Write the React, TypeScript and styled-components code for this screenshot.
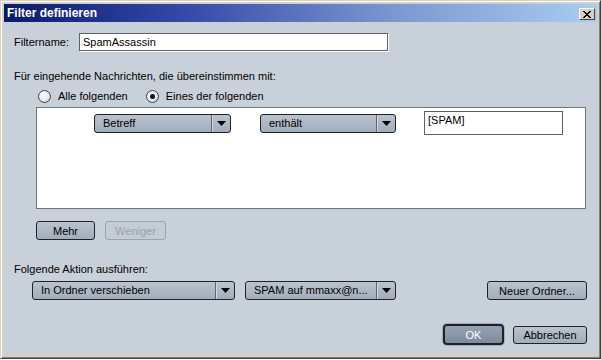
import React from "react";
import styled, { createGlobalStyle } from "styled-components";

const GlobalStyle = createGlobalStyle`
  html, body {
    margin: 0;
    padding: 0;
    background: #ffffff;
    font-family: "Liberation Sans", Arial, sans-serif;
    font-size: 11px;
    color: #000;
  }
`;

const Frame = styled.div`
  width: 601px;
  height: 359px;
  box-sizing: border-box;
  background: #d4d0c8;
  border-top: 1px solid #d4d0c8;
  border-left: 1px solid #d4d0c8;
  border-right: 1px solid #404040;
  border-bottom: 1px solid #404040;
  box-shadow: inset 1px 1px 0 #ffffff, inset -1px -1px 0 #808080;
  padding: 3px 3px 4px 3px;
  display: flex;
  flex-direction: column;
`;

const TitleBar = styled.div`
  height: 18px;
  display: flex;
  align-items: center;
  justify-content: space-between;
  padding: 0 2px 0 3px;
  background: linear-gradient(to right, #0a1a6a 0%, #3448a8 30%, #7a96d0 65%, #a8cdf2 100%);
`;

const Title = styled.span`
  color: #fff;
  font-weight: bold;
  font-size: 12px;
`;

const CloseButton = styled.div`
  width: 16px;
  height: 12px;
  margin-top: 2px;
  box-sizing: border-box;
  background: #d4d0c8;
  border-top: 1px solid #fff;
  border-left: 1px solid #fff;
  border-right: 1px solid #404040;
  border-bottom: 1px solid #404040;
  display: flex;
  align-items: center;
  justify-content: center;
`;

const Body = styled.div`
  flex: 1;
  background: #c8d0d9;
  padding: 0 10px 0 10px;
  display: flex;
  flex-direction: column;
`;

const Row = styled.div<{ $top: number; $left?: number; $gap?: number }>`
  display: flex;
  align-items: center;
  margin-top: ${({ $top }) => $top}px;
  margin-left: ${({ $left }) => $left ?? 0}px;
  gap: ${({ $gap }) => $gap ?? 0}px;
`;

const Label = styled.span<{ $width?: number }>`
  display: inline-block;
  line-height: 14px;
  white-space: nowrap;
  ${({ $width }) => ($width ? `width: ${$width}px;` : "")}
`;

const TextInput = styled.div<{ $width: number; $height: number }>`
  width: ${({ $width }) => $width}px;
  height: ${({ $height }) => $height}px;
  box-sizing: border-box;
  background: #fff;
  border: 1px solid #5a6272;
  box-shadow: 1px 1px 0 #ffffff;
  padding: 2px 3px;
  line-height: 13px;
  white-space: nowrap;
`;

const RadioItem = styled.label`
  display: flex;
  align-items: center;
  gap: 7px;
  line-height: 14px;
`;

const RadioCircle = styled.span<{ $checked?: boolean }>`
  width: 13px;
  height: 13px;
  box-sizing: border-box;
  border-radius: 50%;
  border: 1px solid #3c4450;
  background: radial-gradient(circle at 40% 35%, #ffffff 0%, #e4e9ee 55%, #b4bfcc 100%);
  display: flex;
  align-items: center;
  justify-content: center;

  &::after {
    content: "";
    width: 5px;
    height: 5px;
    border-radius: 50%;
    background: #101418;
    display: ${({ $checked }) => ($checked ? "block" : "none")};
  }
`;

const ListBox = styled.div`
  margin-top: 4px;
  margin-left: 22px;
  width: 550px;
  height: 102px;
  box-sizing: border-box;
  background: #fff;
  border: 1px solid #6c7480;
  padding: 3px 0 0 57px;
`;

const Select = styled.div<{ $width: number }>`
  width: ${({ $width }) => $width}px;
  height: 19px;
  box-sizing: border-box;
  border: 1px solid #1c2228;
  border-radius: 3px;
  background: linear-gradient(#bac3cf, #a2adbc);
  display: flex;
  align-items: stretch;
`;

const SelectText = styled.span`
  flex: 1;
  padding-left: 8px;
  line-height: 17px;
  white-space: nowrap;
  overflow: hidden;
`;

const SelectArrow = styled.span`
  width: 18px;
  border-left: 1px solid #5c6674;
  box-shadow: inset 1px 0 0 #d0d6de;
  display: flex;
  align-items: center;
  justify-content: center;
`;

const Button = styled.div<{ $width: number; $height?: number; $disabled?: boolean }>`
  width: ${({ $width }) => $width}px;
  height: ${({ $height }) => $height ?? 19}px;
  box-sizing: border-box;
  border: 1px solid ${({ $disabled }) => ($disabled ? "#9aa4b2" : "#1c2228")};
  border-radius: 3px;
  background: ${({ $disabled }) =>
    $disabled ? "#c4ccd6" : "linear-gradient(#bac3cf, #a2adbc)"};
  color: ${({ $disabled }) => ($disabled ? "#98a2ae" : "#000")};
  display: flex;
  align-items: center;
  justify-content: center;
  white-space: nowrap;
`;

const DefaultButton = styled.div`
  width: 61px;
  height: 21px;
  box-sizing: border-box;
  border: 2px solid #1c2228;
  border-radius: 4px;
  box-shadow: 0 0 0 1px #9eacbc;
  background: linear-gradient(#96a2b4, #7e8a9e);
  color: #fff;
  display: flex;
  align-items: center;
  justify-content: center;
`;

const Spacer = styled.div`
  flex: 1;
`;

const Arrow = () => (
  <svg width="9" height="5" viewBox="0 0 9 5">
    <polygon points="0,0 9,0 4.5,5" fill="#000" />
  </svg>
);

const Dropdown = ({ width, value }: { width: number; value: string }) => (
  <Select $width={width}>
    <SelectText>{value}</SelectText>
    <SelectArrow>
      <Arrow />
    </SelectArrow>
  </Select>
);

function App() {
  return (
    <>
      <GlobalStyle />
      <Frame>
        <TitleBar>
          <Title>Filter definieren</Title>
          <CloseButton>
            <svg width="8" height="7" viewBox="0 0 8 7">
              <path d="M0 0 L7 7 M1 0 L8 7 M7 0 L0 7 M8 0 L1 7" stroke="#000" strokeWidth="1" />
            </svg>
          </CloseButton>
        </TitleBar>
        <Body>
          <Row $top={11}>
            <Label $width={65}>Filtername:</Label>
            <TextInput $width={309} $height={18}>SpamAssassin</TextInput>
          </Row>

          <Row $top={18}>
            <Label>Für eingehende Nachrichten, die übereinstimmen mit:</Label>
          </Row>

          <Row $top={6} $left={24} $gap={18}>
            <RadioItem>
              <RadioCircle />
              Alle folgenden
            </RadioItem>
            <RadioItem>
              <RadioCircle $checked />
              Eines der folgenden
            </RadioItem>
          </Row>

          <ListBox>
            <Row $top={0} $gap={29}>
              <Dropdown width={137} value="Betreff" />
              <Dropdown width={136} value="enthält" />
              <TextInput $width={139} $height={24} style={{ marginLeft: -1 }}>
                [SPAM]
              </TextInput>
            </Row>
          </ListBox>

          <Row $top={12} $left={22} $gap={10}>
            <Button $width={59}>Mehr</Button>
            <Button $width={61} $disabled>
              Weniger
            </Button>
          </Row>

          <Row $top={22}>
            <Label>Folgende Aktion ausführen:</Label>
          </Row>

          <Row $top={5} $left={18} $gap={10}>
            <Dropdown width={203} value="In Ordner verschieben" />
            <Dropdown width={151} value="SPAM auf mmaxx@n..." />
            <Spacer />
            <Button $width={100}>Neuer Ordner...</Button>
          </Row>

          <Row $top={24} $gap={9}>
            <Spacer />
            <DefaultButton>OK</DefaultButton>
            <Button $width={74} $height={18}>
              Abbrechen
            </Button>
          </Row>
        </Body>
      </Frame>
    </>
  );
}

export default App;
